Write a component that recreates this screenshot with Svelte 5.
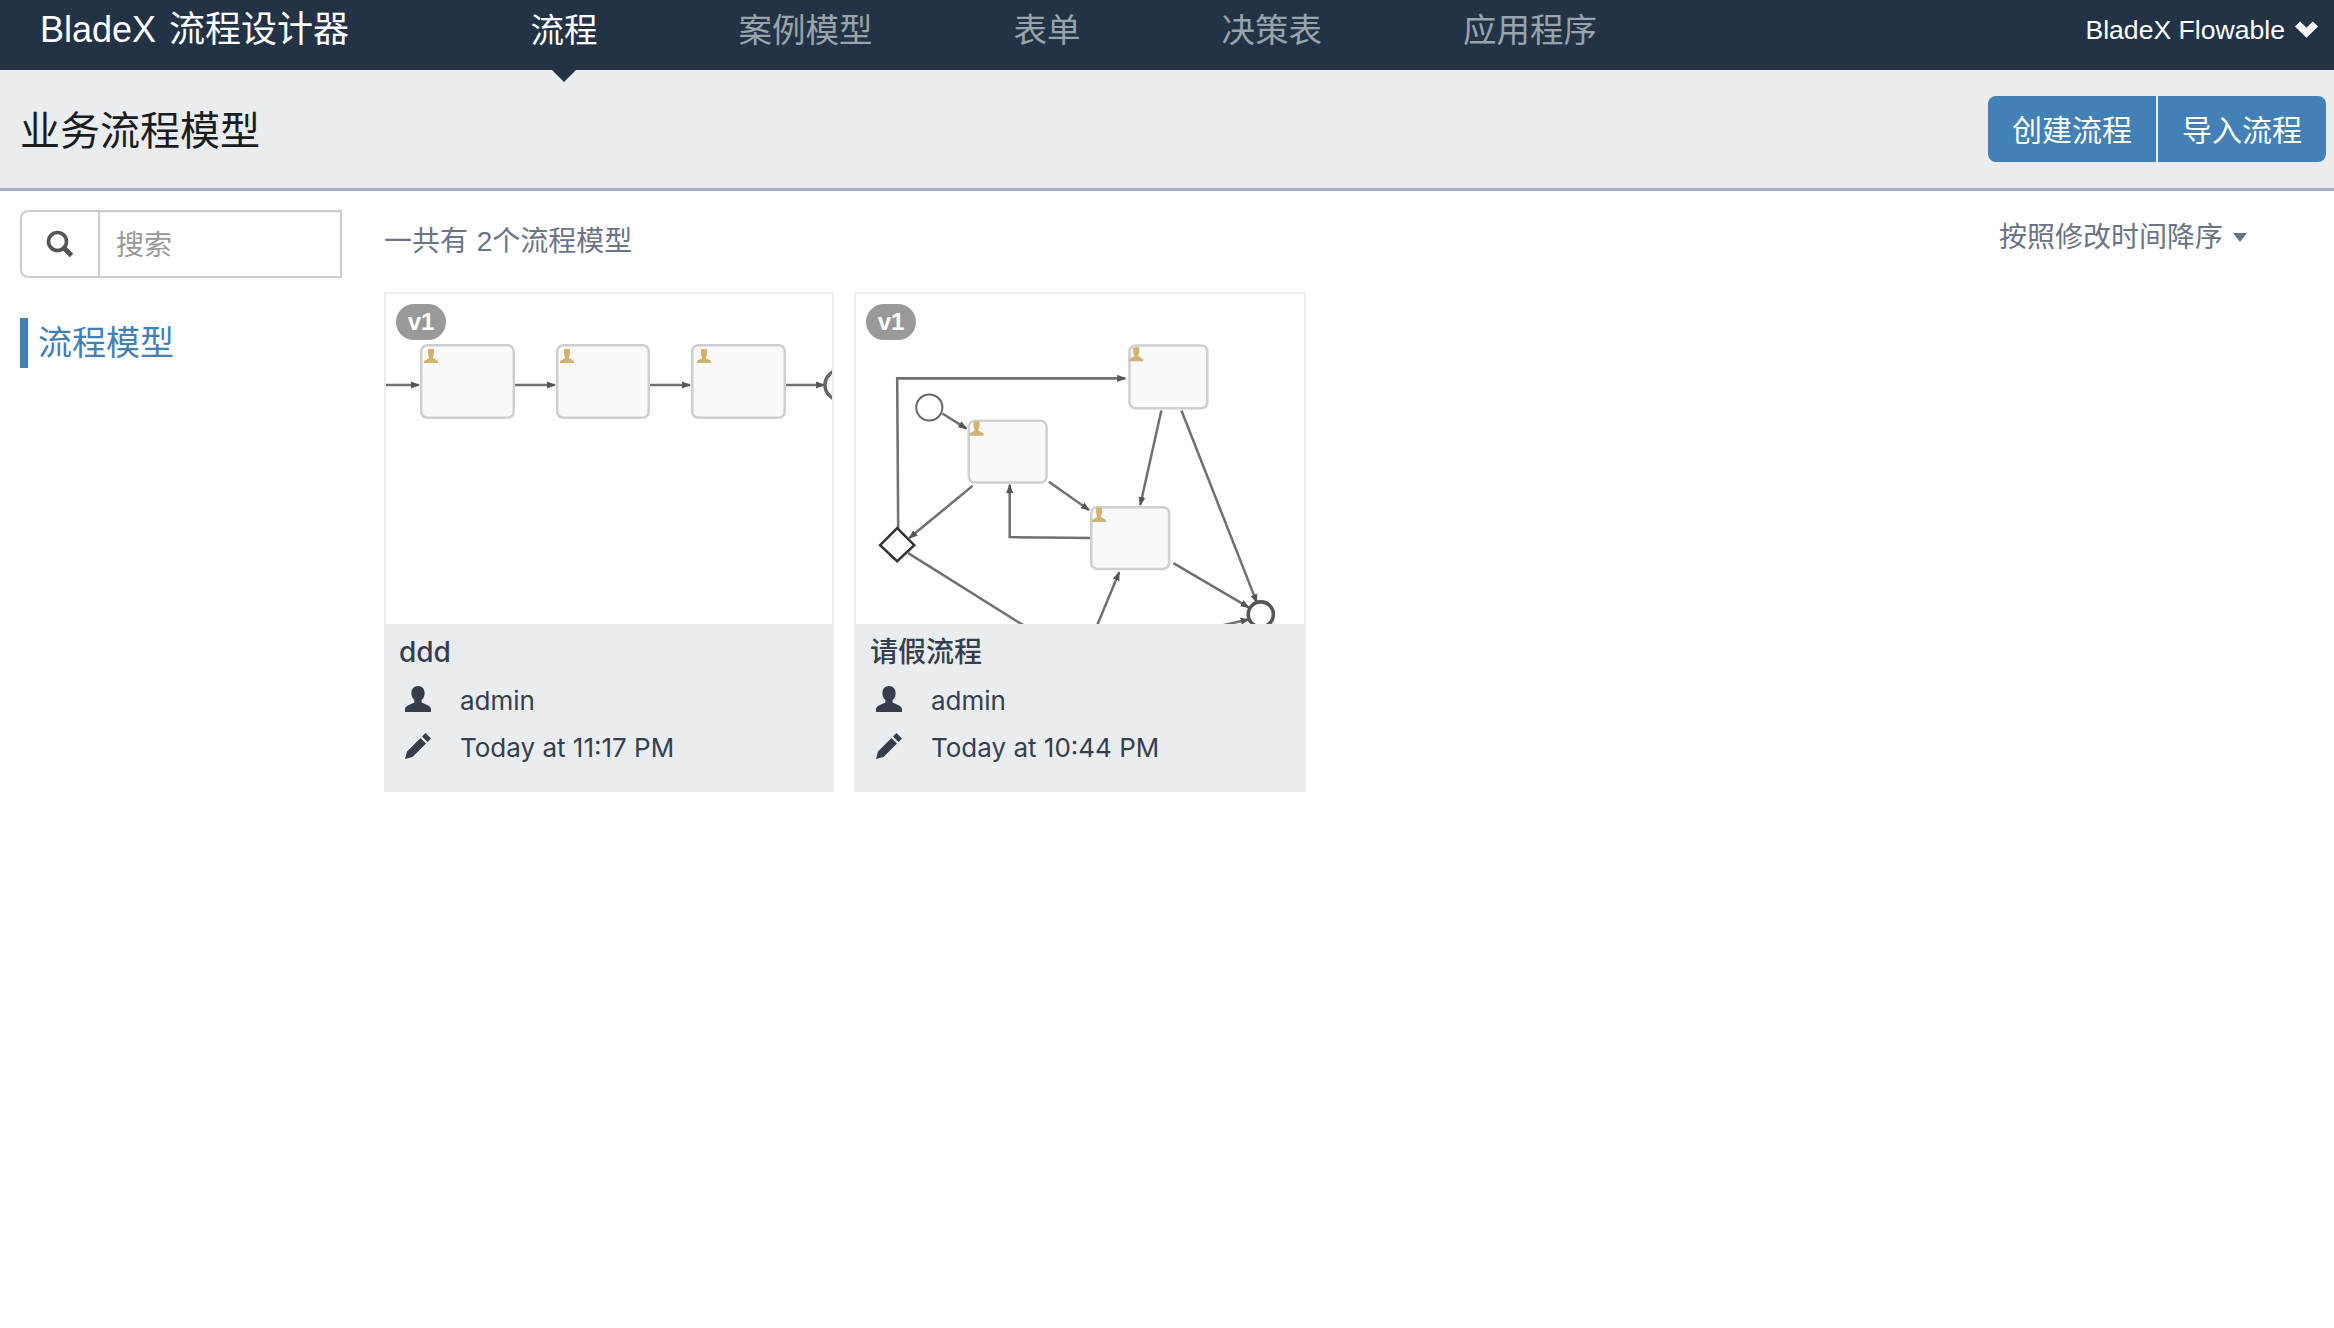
<script>
  const navItems = ["流程", "案例模型", "表单", "决策表", "应用程序"];

  const models = [
    {
      name: "ddd",
      updated: "Today at 11:17 PM",
      tasks: [
        [35.25, 51.25, 92.5, 72.5],
        [171.25, 51.25, 91.5, 72.5],
        [306.25, 51.25, 92.5, 72.5]
      ],
      people: [
        [38, 55],
        [174, 55],
        [311, 55]
      ],
      lines: [
        { pts: "0,91 33,91", arrow: true },
        { pts: "129,91 169,91", arrow: true },
        { pts: "264,91 304,91", arrow: true },
        { pts: "400,91 438,91", arrow: true }
      ],
      circles: [{ cx: 454, cy: 91, r: 15, w: 3.5, color: "#666" }]
    },
    {
      name: "请假流程",
      updated: "Today at 10:44 PM",
      tasks: [
        [272.25, 51.25, 77.5, 62.5],
        [112.25, 126.25, 77.5, 61.5],
        [234.25, 212.25, 77.5, 61.5]
      ],
      people: [
        [272, 53],
        [113, 127],
        [235, 213]
      ],
      lines: [
        { pts: "42,234 41,84 268,84", arrow: true },
        { pts: "86,119 110,134", arrow: true },
        { pts: "116,191 53,243", arrow: true },
        { pts: "192,187 232,215", arrow: true },
        { pts: "236,243 153,242 153,190", arrow: true },
        { pts: "304,116 283,210", arrow: true },
        { pts: "324,116 399,307", arrow: true },
        { pts: "316,268 391,312", arrow: true },
        { pts: "52,258 167,330", arrow: false },
        { pts: "240,330 262,277", arrow: true },
        { pts: "364,330 391,324", arrow: true }
      ],
      circles: [
        { cx: 73, cy: 113, r: 13, w: 2, color: "#666" },
        { cx: 403, cy: 319, r: 12.5, w: 3.5, color: "#555" }
      ],
      diamond: "41,233 58,250 41,266 24,250"
    }
  ];
</script>

<div class="navbar">
  <div class="brand">BladeX 流程设计器</div>
  <ul class="nav">
    {#each navItems as item, i}
      <li class:active={i === 0}>{item}</li>
    {/each}
  </ul>
  <div class="account">
    BladeX Flowable
    <svg class="chevron" width="23" height="17" viewBox="0 0 23 17"><path d="M0 5.500 5.200 0.500 11.500 6.800 17.800 0.500 23 5.500 11.500 16.800z" /></svg>
  </div>
</div>

<div class="subheader">
  <h1>业务流程模型</h1>
  <div class="btn-group">
    <button>创建流程</button>
    <button>导入流程</button>
  </div>
</div>

<div class="content">
  <aside class="sidebar">
    <div class="search">
      <span class="search-icon">
        <svg width="28" height="28" viewBox="0 0 28 28" fill="none" stroke="#555">
          <circle cx="11.500" cy="11.500" r="9" stroke-width="3.600" />
          <path d="M18 18l7.500 7.500" stroke-width="5" />
        </svg>
      </span>
      <span class="placeholder">搜索</span>
    </div>
    <div class="side-item">流程模型</div>
  </aside>

  <main class="main">
    <div class="toolbar">
      <div class="count">一共有 2个流程模型</div>
      <div class="sort">按照修改时间降序<span class="caret"></span></div>
    </div>
    <div class="cards">
      {#each models as model, m}
        <div class="card">
          <div class="preview">
            <span class="badge">v1</span>
            <svg width="100%" height="330" viewBox="0 0 446 330" preserveAspectRatio="xMinYMin slice">
              <defs>
                <marker id="arrow{m}" markerWidth="9" markerHeight="8" refX="8" refY="4" orient="auto" markerUnits="userSpaceOnUse" viewBox="0 0 9 8">
                  <path d="M0 0.500 9 4 0 7.500z" fill="#555" />
                </marker>
              </defs>
              {#each model.lines as line}
                <polyline points={line.pts} fill="none" stroke="#707070" stroke-width="2.500" marker-end={line.arrow ? `url(#arrow${m})` : undefined} />
              {/each}
              {#each model.tasks as t}
                <rect x={t[0]} y={t[1]} width={t[2]} height={t[3]} rx="6" fill="#f9f9f9" stroke="#cfcfcf" stroke-width="2.500" />
              {/each}
              {#each model.people as p}
                <path transform="translate({p[0]} {p[1]})" d="M4 0h6v5l-1 3v1l5 3v2H0v-2l5-3V8L4 5z" fill="#d2b36e" />
              {/each}
              {#each model.circles as c}
                <circle cx={c.cx} cy={c.cy} r={c.r} fill="#fff" stroke={c.color} stroke-width={c.w} />
              {/each}
              {#if model.diamond}
                <polygon points={model.diamond} fill="#fff" stroke="#333" stroke-width="2.500" />
              {/if}
            </svg>
          </div>
          <div class="info">
            <div class="name">{model.name}</div>
            <div class="row">
              <svg width="26" height="26" viewBox="0 0 26 26"><path d="M13 0c4.200 0 6.600 3 6.600 7.200 0 3-1.300 5.400-3 6.800v2.600c2 1.400 9.400 3 9.400 6.400v3H0v-3c0-3.400 7.400-5 9.400-6.400V14c-1.700-1.400-3-3.800-3-6.800C6.400 3 8.800 0 13 0z" /></svg>
              <span>admin</span>
            </div>
            <div class="row">
              <svg width="26" height="26" viewBox="0 0 26 26"><path d="M0 26l2-7.500L15.500 5l5.500 5.500L7.500 24zM17 3.500L20.500 0 26 5.500 22.500 9z" /></svg>
              <span>{model.updated}</span>
            </div>
          </div>
        </div>
      {/each}
    </div>
  </main>
</div>

<style>
  :global(body) {
    background: #fff;
    font-family: "Liberation Sans", "Noto Sans CJK SC", sans-serif;
  }
  .navbar {
    display: flex;
    height: 70px;
    background: #233345;
    color: #fff;
    line-height: 60px;
  }
  .brand {
    width: 420px;
    padding-left: 40px;
    font-size: 36px;
    word-spacing: 3px;
    white-space: nowrap;
  }
  .nav {
    display: flex;
    margin: 0;
    padding: 0;
    list-style: none;
    font-size: 33.500px;
    line-height: 62px;
    color: #98a3ac;
  }
  .nav li {
    position: relative;
    height: 70px;
    padding: 0 70.500px;
  }
  .nav li.active {
    color: #fff;
  }
  .nav li.active::after {
    content: "";
    position: absolute;
    left: 50%;
    top: 70px;
    margin-left: -12px;
    border-top: 12px solid #233345;
    border-left: 12px solid transparent;
    border-right: 12px solid transparent;
  }
  .account {
    display: flex;
    align-items: center;
    gap: 10px;
    height: 60px;
    margin-left: auto;
    padding-right: 16px;
    font-size: 26.600px;
  }
  .chevron {
    fill: #fff;
    margin-top: -2px;
  }
  .subheader {
    display: flex;
    align-items: center;
    justify-content: space-between;
    box-sizing: border-box;
    height: 121px;
    padding: 0 8px 2px 20px;
    background: #e9edf0;
    border-bottom: 3px solid #a8b1bf;
  }
  h1 {
    margin: 0;
    font-size: 40px;
    font-weight: 400;
    color: #1c1c1c;
  }
  .btn-group {
    display: flex;
    gap: 2px;
    margin-top: 2px;
  }
  button {
    width: 168px;
    height: 66px;
    padding: 0 0 2px;
    border: none;
    background: #4280b5;
    color: #fff;
    font: inherit;
    font-size: 30px;
    border-radius: 0 8px 8px 0;
  }
  button:first-child {
    border-radius: 8px 0 0 8px;
  }
  .content {
    display: flex;
    padding: 19px 0 0 20px;
  }
  .sidebar {
    width: 322px;
    flex: none;
  }
  .search {
    display: flex;
    box-sizing: border-box;
    height: 68px;
    border: 2px solid #ccc;
    border-radius: 8px 0 0 8px;
  }
  .search-icon {
    display: flex;
    align-items: center;
    justify-content: center;
    width: 76px;
    border-right: 2px solid #ccc;
  }
  .placeholder {
    flex: 1;
    padding-left: 16px;
    font-size: 28px;
    line-height: 67px;
    color: #999;
    box-shadow: inset 0 1px 1px rgba(0, 0, 0, 0.075);
  }
  .side-item {
    margin-top: 40px;
    padding-left: 10px;
    border-left: 8px solid #4280b5;
    font-size: 34px;
    line-height: 50px;
    color: #4280b5;
  }
  .main {
    flex: 1;
    margin-left: 42px;
    padding-right: 87px;
  }
  .toolbar {
    display: flex;
    justify-content: space-between;
    height: 82px;
    font-size: 28px;
    color: #6b7484;
  }
  .count {
    margin-top: 11px;
    line-height: 41px;
    word-spacing: 1px;
  }
  .sort {
    display: flex;
    align-items: center;
    height: 40px;
    margin-top: 5px;
  }
  .caret {
    margin: 5px 0 0 10px;
    border-top: 9px solid #6b7484;
    border-left: 7.500px solid transparent;
    border-right: 7.500px solid transparent;
  }
  .cards {
    display: flex;
    gap: 20px;
  }
  .card {
    box-sizing: border-box;
    width: 450px;
    height: 500px;
    border: 2px solid #e9edf0;
    background: #e9edf0;
  }
  .card + .card {
    width: 452px;
  }
  .card + .card .info {
    padding-left: 1px;
  }
  .preview {
    position: relative;
    height: 330px;
    overflow: hidden;
    background: #fff;
  }
  .preview svg {
    display: block;
    filter: blur(0.4px);
  }
  .badge {
    position: absolute;
    left: 10px;
    top: 10px;
    width: 50px;
    height: 36px;
    border-radius: 18px;
    background: #999;
    color: #fff;
    font-size: 24px;
    font-weight: 700;
    line-height: 36px;
    text-align: center;
  }
  .info {
    padding-top: 6px;
    color: #363e4c;
    font-family: Inter, "Noto Sans CJK SC", sans-serif;
    font-size: 26px;
  }
  .name {
    height: 47px;
    padding-left: 13px;
    font-size: 28px;
    line-height: 45px;
    font-weight: 500;
  }
  .row {
    display: flex;
    align-items: center;
    gap: 29px;
    height: 47px;
    padding-left: 19px;
  }
  .row svg {
    fill: #363e4c;
    flex: none;
    margin-top: -3px;
  }
</style>
